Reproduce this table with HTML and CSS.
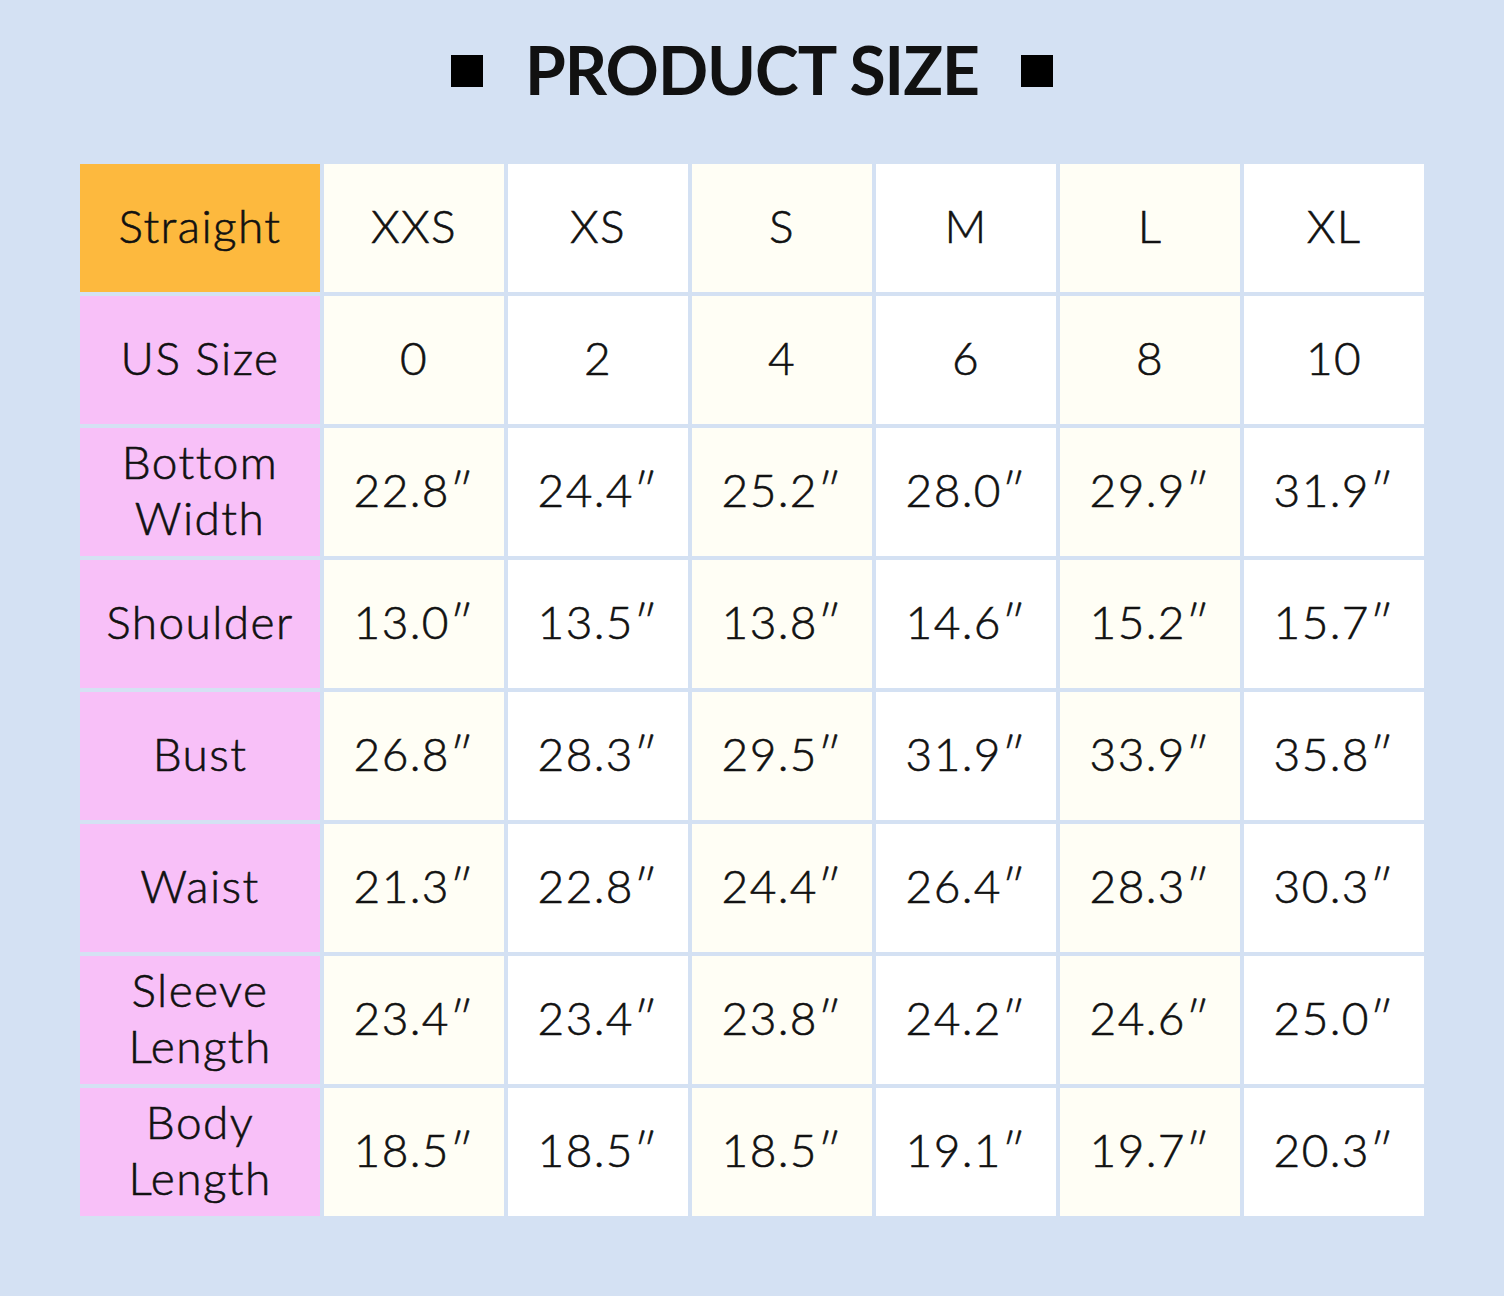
FILE: index.html
```html
<!DOCTYPE html>
<html>
<head>
<meta charset="utf-8">
<link rel="stylesheet" href="styles.css">
</head>
<body>
<div class="page">
  <h1 class="title"><span class="sq"></span><span class="title-text">PRODUCT SIZE</span><span class="sq"></span></h1>
  <div class="chart">
    <div class="cell head-corner">Straight</div>
    <div class="cell cream">XXS</div>
    <div class="cell white">XS</div>
    <div class="cell cream">S</div>
    <div class="cell white">M</div>
    <div class="cell cream">L</div>
    <div class="cell white">XL</div>

    <div class="cell label">US Size</div>
    <div class="cell cream">0</div>
    <div class="cell white">2</div>
    <div class="cell cream">4</div>
    <div class="cell white">6</div>
    <div class="cell cream">8</div>
    <div class="cell white">10</div>

    <div class="cell label">Bottom<br>Width</div>
    <div class="cell cream">22.8″</div>
    <div class="cell white">24.4″</div>
    <div class="cell cream">25.2″</div>
    <div class="cell white">28.0″</div>
    <div class="cell cream">29.9″</div>
    <div class="cell white">31.9″</div>

    <div class="cell label">Shoulder</div>
    <div class="cell cream">13.0″</div>
    <div class="cell white">13.5″</div>
    <div class="cell cream">13.8″</div>
    <div class="cell white">14.6″</div>
    <div class="cell cream">15.2″</div>
    <div class="cell white">15.7″</div>

    <div class="cell label">Bust</div>
    <div class="cell cream">26.8″</div>
    <div class="cell white">28.3″</div>
    <div class="cell cream">29.5″</div>
    <div class="cell white">31.9″</div>
    <div class="cell cream">33.9″</div>
    <div class="cell white">35.8″</div>

    <div class="cell label">Waist</div>
    <div class="cell cream">21.3″</div>
    <div class="cell white">22.8″</div>
    <div class="cell cream">24.4″</div>
    <div class="cell white">26.4″</div>
    <div class="cell cream">28.3″</div>
    <div class="cell white">30.3″</div>

    <div class="cell label">Sleeve<br>Length</div>
    <div class="cell cream">23.4″</div>
    <div class="cell white">23.4″</div>
    <div class="cell cream">23.8″</div>
    <div class="cell white">24.2″</div>
    <div class="cell cream">24.6″</div>
    <div class="cell white">25.0″</div>

    <div class="cell label">Body<br>Length</div>
    <div class="cell cream">18.5″</div>
    <div class="cell white">18.5″</div>
    <div class="cell cream">18.5″</div>
    <div class="cell white">19.1″</div>
    <div class="cell cream">19.7″</div>
    <div class="cell white">20.3″</div>
  </div>
</div>
</body>
</html>
```

FILE: styles.css
```css
html, body {
  margin: 0;
  padding: 0;
}
body {
  background: #d4e1f3;
  font-family: "Lato", "Noto Sans", sans-serif;
  color: #111;
  width: 1504px;
  height: 1296px;
  overflow: hidden;
}
.page {
  padding: 0 80px;
}
.title {
  margin: 0;
  height: 164px;
  display: flex;
  align-items: flex-start;
  justify-content: center;
  padding-top: 33px;
  box-sizing: border-box;
  font-size: 66px;
  font-weight: 700;
  line-height: 74px;
  letter-spacing: -1px;
}
.sq {
  width: 32px;
  height: 32px;
  background: #000;
  margin-top: 22px;
}
.title-text {
  margin: 0 42px;
}
.chart {
  display: grid;
  grid-template-columns: 240px repeat(6, 180px);
  grid-auto-rows: 128px;
  gap: 4px;
}
.cell {
  display: flex;
  align-items: center;
  justify-content: center;
  text-align: center;
  font-size: 46px;
  line-height: 56px;
  font-weight: 300;
  -webkit-text-stroke: 0.6px #111;
  letter-spacing: 1.4px;
  padding-bottom: 5px;
  box-sizing: border-box;
  color: #111;
}
.head-corner {
  background: #fdb93e;
}
.label {
  background: #f8c0f8;
}
.cream {
  background: #fffef5;
}
.white {
  background: #ffffff;
}
```
